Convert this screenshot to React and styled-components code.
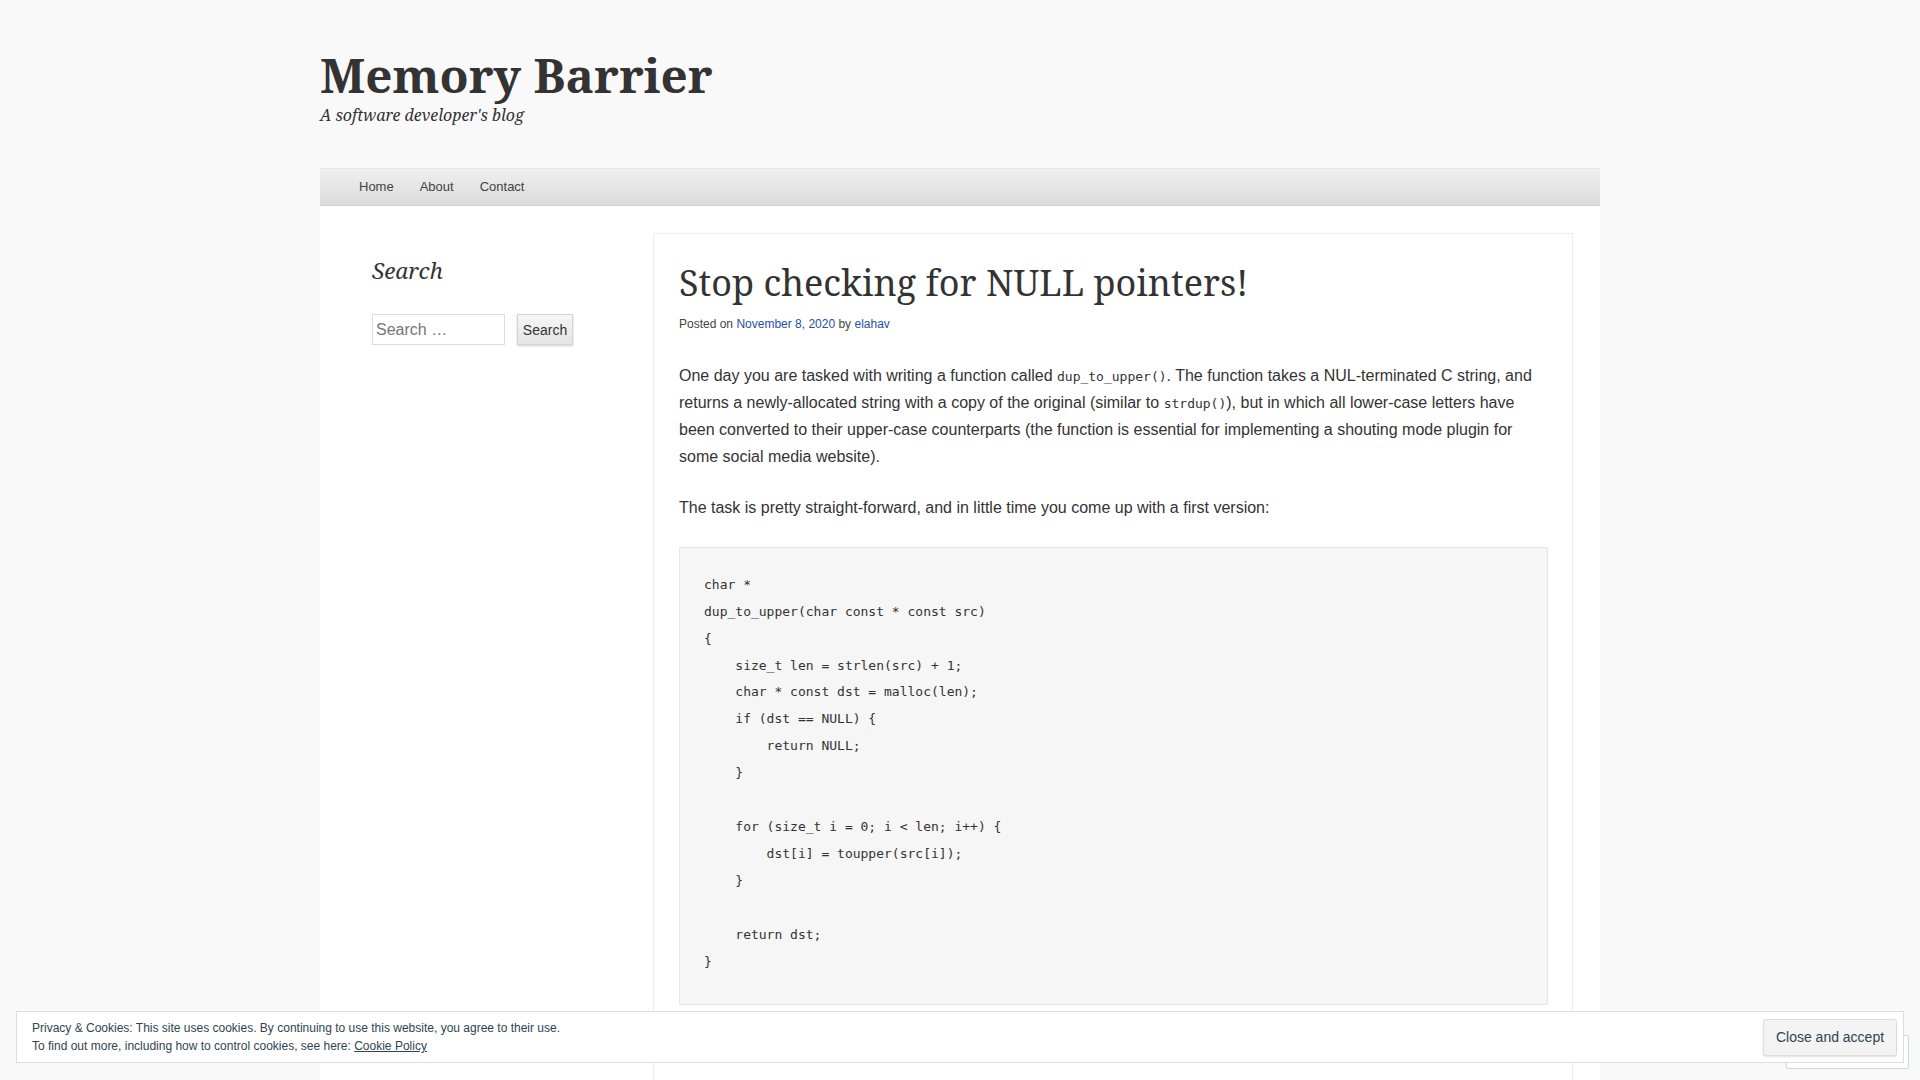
import styled, { createGlobalStyle } from "styled-components";

const GlobalStyle = createGlobalStyle`
    html { overflow: hidden; }
    body {
        margin: 0;
        background: #f9f9f9;
        color: #333;
        font-family: "Liberation Sans", Arial, sans-serif;
    }
`;

const Page = styled.div`
    width: 1280px;
    margin: 0 auto;
`;

const Header = styled.header`
    padding: 46px 0 41px;
`;

const SiteTitle = styled.h1`
    margin: 0;
    font-family: "Noto Serif", "DejaVu Serif", serif;
    font-size: 47.6px;
    font-weight: 700;
    line-height: 57.6px;
    color: #333;
`;

const Tagline = styled.p`
    margin: 0;
    font-family: "Noto Serif", "DejaVu Serif", serif;
    font-style: italic;
    font-size: 16px;
    line-height: 23.8px;
    color: #333;
`;

const Nav = styled.nav`
    display: flex;
    height: 36px;
    padding: 0 39px;
    background: linear-gradient(to bottom, #efefef, #dbdbdb);
    border-top: 1px solid #e4e4e4;
    border-bottom: 1px solid #cecece;
`;

const NavItem = styled.a`
    margin-right: 26px;
    font-size: 13px;
    line-height: 36px;
    color: #444;
    text-decoration: none;
`;

const Main = styled.div`
    display: grid;
    grid-template-columns: 281px 920px;
    padding: 27px 27px 0 52px;
    background: #fff;
    min-height: 900px;
`;

const Sidebar = styled.aside`
    padding-top: 23px;
`;

const WidgetTitle = styled.h2`
    margin: 0 0 28px;
    font-family: "Noto Serif", "DejaVu Serif", serif;
    font-style: italic;
    font-weight: 400;
    font-size: 22.5px;
    line-height: 30px;
    color: #333;
`;

const SearchForm = styled.form`
    display: flex;
    gap: 12px;
`;

const SearchInput = styled.input`
    box-sizing: border-box;
    width: 133px;
    height: 31px;
    padding: 2px 3px;
    border: 1px solid #dddddd;
    font-family: "Liberation Sans", Arial, sans-serif;
    font-size: 16px;
    color: #333;
    background: #fff;
    &::placeholder { color: #767676; }
`;

const SearchButton = styled.button`
    box-sizing: border-box;
    width: 56px;
    height: 31px;
    padding: 0;
    border: 1px solid #d4d4d4;
    background: linear-gradient(to bottom, #f6f6f6, #e4e4e4);
    box-shadow: 0 1px 2px rgba(0, 0, 0, 0.2);
    font-family: "Liberation Sans", Arial, sans-serif;
    font-size: 14px;
    color: #333;
`;

const Article = styled.article`
    padding: 26px 24px 120px 25px;
    border: 1px solid #ededed;
    border-bottom: none;
`;

const PostTitle = styled.h1`
    margin: 0;
    font-family: "Noto Serif", "DejaVu Serif", serif;
    font-weight: 400;
    font-size: 36px;
    line-height: 46.8px;
    color: #333;
`;

const Meta = styled.div`
    margin: 8px 0 30px;
    font-size: 12px;
    line-height: 18px;
    color: #444;
`;

const MetaLink = styled.a`
    color: #2350a8;
    text-decoration: none;
`;

const Para = styled.p`
    margin: 0 0 24px;
    font-size: 16px;
    line-height: 26.9px;
    color: #333;
`;

const Code = styled.code`
    font-family: "DejaVu Sans Mono", monospace;
    font-size: 13px;
    line-height: 1;
`;

const CodeBlock = styled.pre`
    margin: 25px 0 24px;
    padding: 24px 24px 28px;
    background: #f6f6f6;
    border: 1px solid #e6e6e6;
    font-family: "DejaVu Sans Mono", monospace;
    font-size: 13px;
    line-height: 26.94px;
    color: #333;
`;

const CookieBar = styled.div`
    position: fixed;
    left: 16px;
    right: 16px;
    bottom: 17px;
    z-index: 2;
    box-sizing: border-box;
    height: 52px;
    display: flex;
    align-items: center;
    justify-content: space-between;
    padding: 0 6px 0 15px;
    background: #fff;
    border: 1px solid #dedede;
`;

const CookieText = styled.div`
    font-size: 12px;
    line-height: 18.5px;
    color: #2e4453;
`;

const CookieLink = styled.a`
    color: #2e4453;
    text-decoration: underline;
`;

const AcceptButton = styled.button`
    box-sizing: border-box;
    width: 134px;
    height: 37px;
    padding: 0;
    border: 1px solid #dedede;
    border-radius: 3px;
    background: #f3f3f3;
    box-shadow: 0 1px 2px rgba(0, 0, 0, 0.12);
    font-family: "Liberation Sans", Arial, sans-serif;
    font-size: 14px;
    color: #2e4453;
`;

const FollowBox = styled.div`
    position: fixed;
    right: 11px;
    bottom: 11px;
    z-index: 1;
    box-sizing: border-box;
    width: 123px;
    height: 34px;
    background: #fff;
    border: 1px solid #cdd6de;
    border-radius: 2px;
`;

const code = `char *
dup_to_upper(char const * const src)
{
    size_t len = strlen(src) + 1;
    char * const dst = malloc(len);
    if (dst == NULL) {
        return NULL;
    }

    for (size_t i = 0; i < len; i++) {
        dst[i] = toupper(src[i]);
    }

    return dst;
}`;

const App = () => {
    return (
        <>
            <GlobalStyle />
            <Page>
                <Header>
                    <SiteTitle>Memory Barrier</SiteTitle>
                    <Tagline>A software developer's blog</Tagline>
                </Header>
                <Nav>
                    <NavItem href="#">Home</NavItem>
                    <NavItem href="#">About</NavItem>
                    <NavItem href="#">Contact</NavItem>
                </Nav>
                <Main>
                    <Sidebar>
                        <WidgetTitle>Search</WidgetTitle>
                        <SearchForm onSubmit={(e) => e.preventDefault()}>
                            <SearchInput placeholder="Search …" />
                            <SearchButton>Search</SearchButton>
                        </SearchForm>
                    </Sidebar>
                    <Article>
                        <PostTitle>Stop checking for NULL pointers!</PostTitle>
                        <Meta>
                            Posted on <MetaLink href="#">November 8, 2020</MetaLink> by{" "}
                            <MetaLink href="#">elahav</MetaLink>
                        </Meta>
                        <Para>
                            One day you are tasked with writing a function called <Code>dup_to_upper()</Code>. The
                            function takes a NUL-terminated C string, and returns a newly-allocated string with a copy
                            of the original (similar to <Code>strdup()</Code>), but in which all lower-case letters
                            have been converted to their upper-case counterparts (the function is essential for
                            implementing a shouting mode plugin for some social media website).
                        </Para>
                        <Para>
                            The task is pretty straight-forward, and in little time you come up with a first version:
                        </Para>
                        <CodeBlock>{code}</CodeBlock>
                    </Article>
                </Main>
            </Page>
            <FollowBox />
            <CookieBar>
                <CookieText>
                    Privacy &amp; Cookies: This site uses cookies. By continuing to use this website, you agree to
                    their use.
                    <br />
                    To find out more, including how to control cookies, see here:{" "}
                    <CookieLink href="#">Cookie Policy</CookieLink>
                </CookieText>
                <AcceptButton>Close and accept</AcceptButton>
            </CookieBar>
        </>
    );
};

export default App;
